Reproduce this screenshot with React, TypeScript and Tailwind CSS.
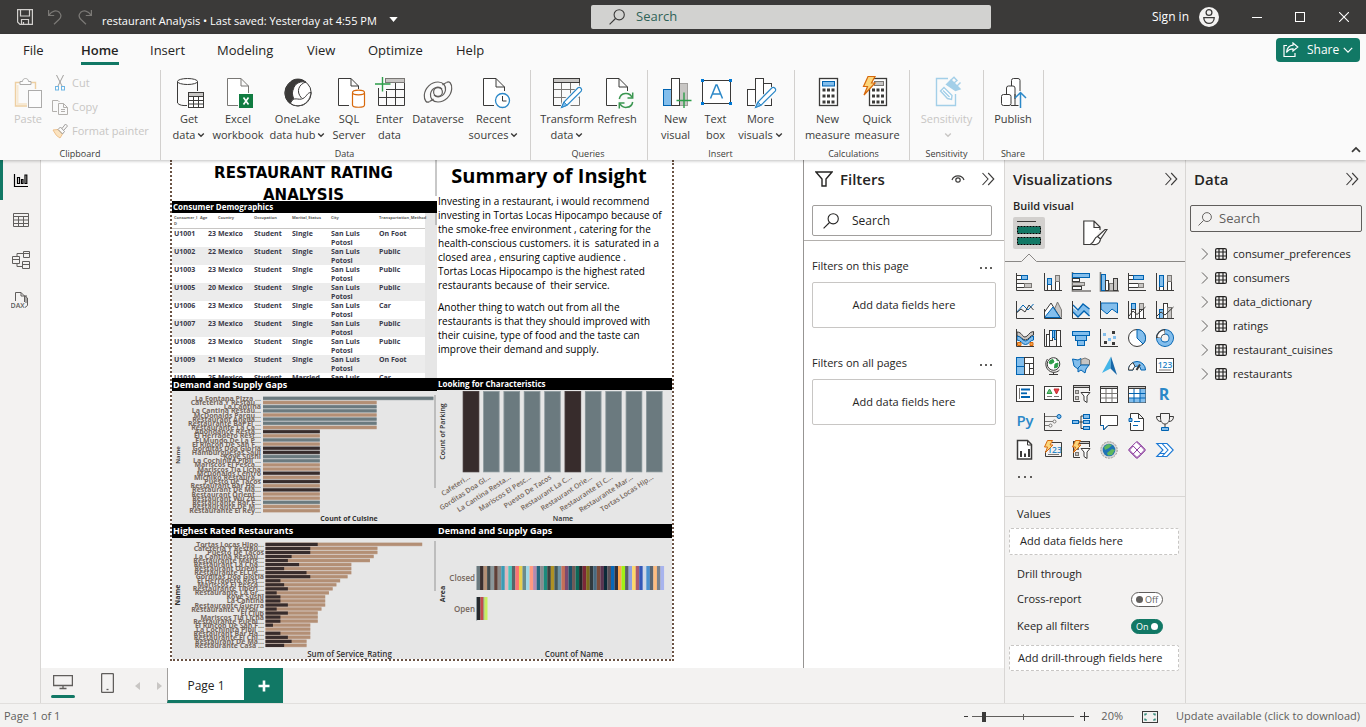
import React, { useState } from "react";

const K = "#3b3a39";
const BF = "#83beec";
const BS = "#0063b1";
const GF = "#c8c6c4";
const GS = "#797774";

type Kids = { children?: React.ReactNode };

/* ---------- shared icons ---------- */

const Magnifier = ({ className }: { className: string }) => (
  <svg viewBox="0 0 16 16" className={className} fill="none" stroke="currentColor" strokeWidth="1.1" aria-hidden>
    <circle cx="10.2" cy="5.8" r="5.1" />
    <path d="M6.5 9.5L.6 15.4" />
  </svg>
);

const ChevronDown = ({ className }: { className: string }) => (
  <svg viewBox="0 0 8 8" className={className} fill="none" stroke="currentColor" strokeWidth="1.4" aria-hidden>
    <path d="M1.2 2.4L4 5.2L6.8 2.4" />
  </svg>
);

const DoubleChevron = () => (
  <svg viewBox="0 0 14 14" className="h-3.5 w-3.5" fill="none" stroke={K} strokeWidth="1.1" aria-hidden>
    <path d="M1.5 1L7 7L1.5 13M7.2 1L12.8 7L7.2 13" />
  </svg>
);

const Dots = () => (
  <>
    <span className="h-0.5 w-0.5 bg-[#605e5c]" />
    <span className="h-0.5 w-0.5 bg-[#605e5c]" />
    <span className="h-0.5 w-0.5 bg-[#605e5c]" />
  </>
);

/* ---------- ribbon icons ---------- */

const Big = ({ children, box = "0 0 30 32" }: Kids & { box?: string }) => (
  <svg viewBox={box} className="h-8 w-[30px] overflow-visible" fill="none" stroke={K} strokeWidth="1" aria-hidden>
    {children}
  </svg>
);

const Pencil = () => (
  <g>
    <path d="M27 10.6a2.6 2.6 0 0 1 3.4 3.8L16 29L9.6 31L11.6 24.6z" fill="#fff" stroke="#fafafa" strokeWidth="3" />
    <path d="M26 10.8a2.4 2.4 0 0 1 3.2 3.4L15 28.2L9.6 30.4L12 25z" fill="#fff" stroke="#2b88c8" strokeWidth="1.2" />
    <path d="M12 25L15 28.2L9.6 30.4z" fill={BF} stroke="#2b88c8" />
  </g>
);

const IconPaste = () => (
  <Big>
    <g opacity=".5">
      <path d="M7 5.500H2.500V29H14" stroke="#e3a64c" strokeWidth="1.400" />
      <path d="M4.500 8V27H14" stroke="#f5d9ad" strokeWidth="2" />
      <path d="M17 5.500H22.500V12" stroke="#e3a64c" strokeWidth="1.400" />
      <path d="M7 7.500V4.500H9.500C9.500 .5 15.500 .5 15.500 4.500H18V7.500z" stroke="#605e5c" fill="#fff" />
      <rect x="15.500" y="13.500" width="13" height="17" stroke="#605e5c" fill="#fff" />
    </g>
  </Big>
);

const IconGetData = () => (
  <Big box="-2 0 30 32">
    <path d="M1.500 4.500V26C3 28.300 7 28.800 11 28.500" fill="none" />
    <path d="M21.500 4.500V14" />
    <ellipse cx="11.500" cy="4.500" rx="10" ry="3" fill="#fff" />
    <rect x="12.500" y="15.500" width="15" height="15" fill="#fff" />
    <rect x="12.500" y="15.500" width="15" height="4" fill={GF} />
    <path d="M17.500 19.500V30.500M22.500 19.500V30.500M12.500 23.500H27.500M12.500 27H27.500" />
  </Big>
);

const IconExcel = () => (
  <Big box="-1 0 30 32">
    <path d="M14 28.500H3.500V1.500H17L24.500 9V16M17 1.500V9H24.500" fill="#fff" stroke={GS} />
    <rect x="15" y="17" width="14" height="14" fill="#107c41" stroke="none" />
    <path d="M19.500 20.500L24.500 27.500M24.500 20.500L19.500 27.500" stroke="#fff" strokeWidth="1.600" />
  </Big>
);

const IconOneLake = () => (
  <Big>
    <circle cx="15" cy="15.800" r="13.200" fill="#fff" />
    <path d="M7.500 5C10.500 1.200 19 1 22.500 5C16.500 4 10.500 8 9.300 16C9.800 20.500 11 23 13.500 25.500C10 27.500 7.500 27.500 5.500 25C.5 20 1.200 10.500 7.500 5z" fill={K} />
    <path d="M11 10.500C12.500 6 18 4 23 5C16 7 12.500 14.500 18.500 21" fill="#fff" />
    <path d="M7.500 26C11 18.500 15 24 20 21.500C24 19.500 24 15.500 28 15.500C27.500 22 23 28.500 15 28.800C11.500 28.800 9 27.800 7.500 26z" fill="#fff" />
  </Big>
);

const IconSql = () => (
  <Big box="-1 0 30 32">
    <path d="M14 28.500H3.500V1.500H16L23.500 9V12M16 1.500V9H23.500" fill="#fff" />
    <g stroke="#d8690c" strokeWidth="1.200">
      <path d="M17.500 16V28C17.500 31 29.500 31 29.500 28V16" fill="#fff" />
      <ellipse cx="23.500" cy="15.500" rx="6" ry="2.300" fill="#fff" />
    </g>
  </Big>
);

const IconEnter = () => (
  <Big>
    <path d="M3.500 11V28.500H29.500V1.500H10M3.500 20.500H29.500M11.500 14V28.500M20.500 6V28.500M11 12.500H29.500" />
    <rect x="10.500" y="1.500" width="19" height="4" fill={GF} stroke={GS} />
    <path d="M7.500 0V14.500M0 7H15.500" stroke="#2d9d49" strokeWidth="1.400" />
  </Big>
);

const IconDataverse = () => (
  <Big>
    <g stroke="#605e5c" strokeWidth="1.200">
      <path d="M23.500 5.500C26 3.500 29 6 28.700 12C28 19 22 25 15 25C9.500 25 7 21 7.500 17C8.500 10.500 15.500 8.500 19 12" />
      <path d="M6.500 24.500C4 26.500 1 24 1.300 18C2 11 8 5 15 5C20.500 5 23 9 22.500 13C21.500 19.500 14.500 21.500 11 18" />
      <circle cx="15" cy="15" r="4.400" />
      <path d="M23.500 5.500C21.500 6.500 20.500 7 19.500 8M6.500 24.500C8.500 23.500 9.500 23 10.500 22" />
    </g>
  </Big>
);

const IconRecent = () => (
  <Big box="-1 0 30 32">
    <path d="M14 28.500H3.500V1.500H16L24.500 10V14M16 1.500V10H24.500" fill="#fff" />
    <circle cx="22.500" cy="23.500" r="7" fill="#fff" stroke="#2b88c8" strokeWidth="1.300" />
    <path d="M22.500 19V24H26.500" />
  </Big>
);

const IconTransform = () => (
  <Big>
    <path d="M1.500 1.500V28.500H27.500V1.500zM1.500 12.500H27.500M1.500 20.500H27.500M9.500 5.500V28.500M18.500 5.500V28.500" stroke={GS} />
    <rect x="1.500" y="1.500" width="26" height="4" fill={GF} />
    <path d="M1.500 1.500V28.500H11" />
    <Pencil />
  </Big>
);

const IconRefresh = () => (
  <Big box="-2 0 30 32">
    <path d="M13 28.500H2.500V1.500H15L23.500 10V14M15 1.500V10H23.500" fill="#fff" />
    <circle cx="22" cy="23.500" r="8" fill="#fafafa" stroke="none" />
    <g stroke="#3a9650" strokeWidth="1.500">
      <path d="M15.300 22C16.500 15.500 25.500 14.500 28 20.500M28.700 25C27.500 31.500 18.500 32.300 16 26.500" />
      <path d="M28.700 15.500V21H23.500M15.300 31.500V26H20.500" />
    </g>
  </Big>
);

const IconNewVisual = () => (
  <Big>
    <rect x="2.500" y="12.500" width="8" height="16" fill={BF} stroke={BS} />
    <rect x="18.500" y="6.500" width="8" height="22" fill={GF} stroke="#a19f9d" />
    <rect x="10.500" y="1.500" width="8" height="27" fill="#fff" />
    <path d="M23 15.500V31M15.500 23.500H30.500" stroke="#2d9d49" strokeWidth="1.400" />
  </Big>
);

const IconTextBox = () => (
  <Big>
    <rect x="1.500" y="3.500" width="28" height="23" fill="#fff" />
    <path d="M0 2h3v3h-3zM28 2h3v3h-3zM0 25h3v3h-3zM28 25h3v3h-3z" fill="#0078d4" stroke="none" />
    <path d="M9.500 21.500L15 8H16L21.500 21.500M11.500 17H19.500" stroke="#2b88c8" strokeWidth="1.500" />
  </Big>
);

const IconMoreVisuals = () => (
  <Big>
    <rect x="1.500" y="12.500" width="8" height="16" fill="#fff" />
    <rect x="17.500" y="6.500" width="8" height="22" fill="#fff" />
    <rect x="9.500" y="1.500" width="8" height="27" fill="#fff" />
    <Pencil />
  </Big>
);

const dots = (x: number, y: number) =>
  [0, 1, 2].flatMap((r) =>
    [0, 1, 2].map((c) => <rect key={`${r}-${c}`} x={x + c * 4.5} y={y + r * 6} width="3" height="3" fill={K} stroke="none" />)
  );

const IconNewMeasure = () => (
  <Big>
    <rect x="6.500" y="1.500" width="18" height="27" fill="#fff" strokeWidth="1.300" />
    <rect x="9.500" y="4.500" width="12" height="4.500" fill={BF} stroke={BS} />
    {dots(9.5, 11.5)}
  </Big>
);

const IconQuick = () => (
  <Big>
    <rect x="7.500" y="1.500" width="17" height="27" fill="#fff" strokeWidth="1.300" />
    <rect x="12.500" y="4.500" width="9" height="4" fill={GF} stroke={GS} />
    {dots(10, 11.5)}
    <path d="M6 -.5H13L9.500 6H13L2 18L5.500 9.500H1.500z" fill="#fbd67c" stroke="#d8690c" strokeWidth="1.200" />
  </Big>
);

const IconSensitivity = () => (
  <Big>
    <g stroke="#a3cfe8" strokeWidth="1.400">
      <path d="M16 1.500H4.500V28.500H23.500V17" />
      <path d="M8.500 14L12 10.500L20 18.500L19.500 22.500L15.500 21.500z" fill="#fff" />
      <path d="M11 13.500L17.500 20" />
      <path d="M14.500 7.500L19 3L28 12L23.500 13.500z" fill="#a3cfe8" />
      <path d="M19 3L22 .3L25 3.500L22 6M25 9L28.500 5.500" />
    </g>
  </Big>
);

const IconPublish = () => (
  <Big box="-2 0 30 32">
    <path d="M11.500 9V3.500a2 2 0 0 1 2-2H18a2 2 0 0 1 2 2V14" fill="#fff" />
    <path d="M6.500 17V11a2 2 0 0 1 2-2H13a2 2 0 0 1 2 2V28.500" fill="#fff" />
    <rect x="1.500" y="17.500" width="9.500" height="11" rx="2" fill="#fff" />
    <path d="M11 28.500H18.500M15 22V17" />
    <path d="M20.500 31V15.500M15 21L20.500 15.500L26 21" stroke="#2b88c8" strokeWidth="1.500" />
  </Big>
);

type RibbonItem = { icon: React.ReactNode; lines: string[]; width: string; menu?: boolean; disabled?: boolean };

const RibbonButton = ({ icon, lines, width, menu, disabled }: RibbonItem) => (
  <button
    type="button"
    disabled={disabled}
    className={`${width} flex flex-col items-center text-[11px] leading-4 whitespace-nowrap ${disabled ? "text-[#c8c6c4]" : "text-[#3b3a39]"}`}
  >
    {icon}
    <span className="pt-0.5">{lines[0]}</span>
    <span className="flex h-4 items-center">
      {lines[1]}
      {menu && <ChevronDown className="ml-0.5 h-2 w-2" />}
    </span>
  </button>
);

const groups: { label: string; pad: string; items: RibbonItem[] }[] = [
  {
    label: "Data",
    pad: "pl-[5px] pr-[7px]",
    items: [
      { icon: <IconGetData />, lines: ["Get", "data"], menu: true, width: "w-[46px]" },
      { icon: <IconExcel />, lines: ["Excel", "workbook"], width: "w-[52px]" },
      { icon: <IconOneLake />, lines: ["OneLake", "data hub"], menu: true, width: "w-[67px]" },
      { icon: <IconSql />, lines: ["SQL", "Server"], width: "w-[36px]" },
      { icon: <IconEnter />, lines: ["Enter", "data"], width: "w-[45px]" },
      { icon: <IconDataverse />, lines: ["Dataverse"], width: "w-[52px]" },
      { icon: <IconRecent />, lines: ["Recent", "sources"], menu: true, width: "w-[59px]" },
    ],
  },
  {
    label: "Queries",
    pad: "pl-[7px] pr-[9px]",
    items: [
      { icon: <IconTransform />, lines: ["Transform", "data"], menu: true, width: "w-[58px]" },
      { icon: <IconRefresh />, lines: ["Refresh"], width: "w-[42px]" },
    ],
  },
  {
    label: "Insert",
    pad: "pl-[7px] pr-2",
    items: [
      { icon: <IconNewVisual />, lines: ["New", "visual"], width: "w-[41px]" },
      { icon: <IconTextBox />, lines: ["Text", "box"], width: "w-[39px]" },
      { icon: <IconMoreVisuals />, lines: ["More", "visuals"], menu: true, width: "w-[51px]" },
    ],
  },
  {
    label: "Calculations",
    pad: "pl-[9px] pr-[6px]",
    items: [
      { icon: <IconNewMeasure />, lines: ["New", "measure"], width: "w-[47px]" },
      { icon: <IconQuick />, lines: ["Quick", "measure"], width: "w-[52px]" },
    ],
  },
  {
    label: "Sensitivity",
    pad: "px-[10px]",
    items: [{ icon: <IconSensitivity />, lines: ["Sensitivity", ""], menu: true, disabled: true, width: "w-[53px]" }],
  },
  {
    label: "Share",
    pad: "pl-[9px] pr-[10px]",
    items: [{ icon: <IconPublish />, lines: ["Publish"], width: "w-[40px]" }],
  },
];

/* ---------- title bar and ribbon ---------- */

const TitleBar = () => (
  <header className="flex h-[34px] items-center bg-[#3b3a39] text-xs text-white">
    <div className="flex flex-[591_1_0%] items-center">
      <button type="button" aria-label="Save" className="ml-[17px]">
        <svg viewBox="0 0 16 16" className="h-4 w-4" fill="none" stroke="#d2d0ce" strokeWidth="1.200">
          <path d="M.6.6H15.400V15.400H3L.6 13z" />
          <path d="M3.500.6V7H12.500V.6M4.500 15.400V10.500H11.500V15.400M6.500 13V15.400" />
        </svg>
      </button>
      <button type="button" aria-label="Undo" className="ml-[14px]">
        <svg viewBox="0 0 16 16" className="h-4 w-4" fill="none" stroke="#7b7976" strokeWidth="1.200">
          <path d="M1.600 1V6.500H7.200M1.800 6.300C5 1.500 9.500.8 12.300 3.300C14.800 5.800 14 8.500 12 10.500L7 15.300" />
        </svg>
      </button>
      <button type="button" aria-label="Redo" className="ml-[14px]">
        <svg viewBox="0 0 16 16" className="h-4 w-4" fill="none" stroke="#7b7976" strokeWidth="1.200">
          <path d="M14.400 1V6.500H8.800M14.200 6.300C11 1.500 6.500.8 3.700 3.300C1.200 5.800 2 8.500 4 10.500L9 15.300" />
        </svg>
      </button>
      <button type="button" className="ml-[9px] flex items-center pt-2 text-[11px] whitespace-nowrap">
        restaurant Analysis • Last saved: Yesterday at 4:55 PM
        <svg viewBox="0 0 10 6" className="mb-1 ml-3 h-[5px] w-[9px]" aria-hidden>
          <path d="M0 0H10L5 6z" fill="#fff" />
        </svg>
      </button>
    </div>
    <label className="flex h-6 w-[400px] items-center rounded-xs bg-[#d2d2d0] pl-[18px]">
      <span className="sr-only">Search</span>
      <Magnifier className="h-4 w-4 text-[#3b3a39]" />
      <input type="search" placeholder="Search" className="ml-[11px] flex-1 bg-transparent text-[13px] outline-none placeholder:text-[#2f6358]" />
    </label>
    <div className="flex flex-[375_1_0%] items-center justify-end">
      <button type="button" className="flex items-center gap-2.5">
        Sign in
        <svg viewBox="0 0 20 20" className="h-5 w-5" aria-hidden>
          <circle cx="10" cy="10" r="10" fill="#f3f2f1" />
          <circle cx="10" cy="5.500" r="2.900" fill="none" stroke={K} strokeWidth="1.300" />
          <path d="M4.800 10.700H15.200C15.200 18.300 4.800 18.300 4.800 10.700z" fill="none" stroke={K} strokeWidth="1.300" />
        </svg>
      </button>
      <button type="button" aria-label="Minimize" className="ml-[27px] flex h-[34px] w-[44px] items-center pl-[6px]">
        <span className="h-px w-[10px] bg-white" />
      </button>
      <button type="button" aria-label="Maximize" className="flex w-[44px] pl-[5px]">
        <span className="h-2.5 w-2.5 border border-white" />
      </button>
      <button type="button" aria-label="Close" className="w-8 pl-[5px]">
        <svg viewBox="0 0 10 10" className="h-2.5 w-2.5" stroke="#fff" strokeWidth="1.100">
          <path d="M0 0L10 10M10 0L0 10" />
        </svg>
      </button>
    </div>
  </header>
);

const menus = [
  { name: "File", width: "w-[58px]" },
  { name: "Home", width: "w-[69px]" },
  { name: "Insert", width: "w-[67px]" },
  { name: "Modeling", width: "w-[90px]" },
  { name: "View", width: "w-[61px]" },
  { name: "Optimize", width: "w-[88px]" },
  { name: "Help", width: "w-[60px]" },
];

const Ribbon = () => (
  <div className="relative z-10 bg-[#fafafa] text-[#252423] shadow-[0_1px_3px_rgba(0,0,0,0.25)]">
    <div className="flex h-9 items-start justify-between pr-1.5 pl-[23px]">
      <nav className="flex pt-1.5 text-[13px] leading-5">
        {menus.map((m) => (
          <button key={m.name} type="button" className={`${m.width} flex`}>
            <span className={m.name === "Home" ? "border-b-[3px] border-[#117865] pb-0.5 font-semibold" : ""}>{m.name}</span>
          </button>
        ))}
      </nav>
      <button type="button" className="mt-1 flex h-6 w-[84px] items-center rounded bg-[#117865] pl-[7px] text-xs text-white">
        <svg viewBox="0 0 16 16" className="h-4 w-4" fill="none" stroke="#fff" strokeWidth="1.200" aria-hidden>
          <path d="M4 3.500H1V14.500H12V11M10 1L14.800 5L10 9V6.800C7 6.800 5 8 3.500 10.500C4 6 6.500 3.500 10 3.200z" />
        </svg>
        <span className="ml-2">Share</span>
        <svg viewBox="0 0 10 10" className="ml-1 h-2.5 w-2.5" fill="none" stroke="#fff" strokeWidth="1.200" aria-hidden>
          <path d="M.8 2.800L5 7.200L9.200 2.800" />
        </svg>
      </button>
    </div>
    <div className="flex h-[90px] items-stretch">
      <div className="flex w-[161px] flex-col border-r border-[#d2d0ce] text-[#c8c6c4]">
        <div className="flex pt-[7px]">
          <button type="button" disabled className="ml-[10px] flex w-[36px] flex-col items-center text-[11px] leading-4">
            <IconPaste />
            <span className="pt-0.5">Paste</span>
          </button>
          <div className="-mt-1.5 flex flex-col pl-[6px] text-[11px] leading-6 whitespace-nowrap">
            <button type="button" disabled className="flex h-6 items-center gap-1">
              <svg viewBox="0 0 16 16" className="h-4 w-4" fill="none" aria-hidden>
                <path d="M4.500 0L10 11M11.500 0L6 11" stroke="#a19f9d" />
                <rect x="3.500" y="11.500" width="3" height="3.500" stroke="#6fb6e4" />
                <rect x="9.500" y="11.500" width="3" height="3.500" stroke="#6fb6e4" />
              </svg>
              Cut
            </button>
            <button type="button" disabled className="flex h-6 items-center gap-1">
              <svg viewBox="0 0 16 16" className="h-4 w-4" fill="none" stroke="#b3b0ad" aria-hidden>
                <path d="M5 12.500H.5V1.500H6L7.500 3M6.500 4.500H11.500L15.500 8.500V15.500H6.500zM11.500 4.500V8.500H15.500M9 10.500H13M9 12.500H13" />
              </svg>
              Copy
            </button>
            <button type="button" disabled className="flex h-6 items-center gap-1">
              <svg viewBox="0 0 16 16" className="h-4 w-4" fill="none" aria-hidden>
                <path d="M1 7L6 6.500L10.500 11L8 15L4.500 12.500z" fill="#fbe3c0" stroke="#eec08a" />
                <path d="M6 6.500L8.500 4L12.500 8.500L10.500 11zM10 5.500L13.500 1L15.500 3L12 7" stroke="#a19f9d" />
              </svg>
              Format painter
            </button>
          </div>
        </div>
        <span className="mt-auto pb-px text-center text-[9px] leading-[11px] text-[#3b3a39]">Clipboard</span>
      </div>
      {groups.map((g) => (
        <div key={g.label} className={`${g.pad} flex flex-col border-r border-[#d2d0ce]`}>
          <div className="flex pt-[7px]">
            {g.items.map((it) => (
              <RibbonButton key={it.lines.join(" ")} {...it} />
            ))}
          </div>
          <span className="mt-auto pb-px text-center text-[9px] leading-[11px] text-[#3b3a39]">{g.label}</span>
        </div>
      ))}
      <button type="button" aria-label="Collapse ribbon" className="mt-auto mr-[5px] mb-[5px] ml-auto">
        <svg viewBox="0 0 8 8" className="h-2.5 w-2.5" fill="none" stroke={K} strokeWidth="1.400">
          <path d="M.8 5.500L4 2.300L7.200 5.500" />
        </svg>
      </button>
    </div>
  </div>
);

/* ---------- view switcher on the left ---------- */

const SideNav = () => (
  <nav className="flex w-[41px] shrink-0 flex-col border-r border-[#d8d6d4] bg-[#f3f2f1]">
    <button type="button" aria-label="Report view" className="flex h-10 items-center border-l-[3px] border-[#117865] pl-2.5">
      <svg viewBox="0 0 16 16" className="h-4 w-4" fill="none" stroke="#000" strokeWidth="1.200">
        <path d="M1.500 2V14.500H15M4.500 5.500h2v6h-2zM8.500 7.500h1.500v4h-1.500zM12 3h1.800v8.500H12z" />
      </svg>
    </button>
    <button type="button" aria-label="Table view" className="flex h-10 items-center pl-[13px]">
      <svg viewBox="0 0 16 16" className="h-4 w-4" fill="none" stroke="#605e5c">
        <path d="M.5 1.500H15.500V14.500H.5zM.5 4.500H15.500M.5 8H15.500M.5 11.500H15.500M5.500 4.500V14.500M10.500 4.500V14.500" />
      </svg>
    </button>
    <button type="button" aria-label="Model view" className="flex h-10 items-center pl-3">
      <svg viewBox="0 0 18 18" className="h-[18px] w-[18px]" fill="none" stroke="#605e5c">
        <path d="M.5 5.500H7.500V12.500H.5zM.5 8.500H7.500M11.500.5H17.500V6.500H11.500zM11.500 2.500H17.500M10.500 10.500H17.500V17.500H10.500zM10.500 13.500H17.500M5 5.500V2.500H11.500M5 12.500V15.500H10.500" />
      </svg>
    </button>
    <button type="button" aria-label="DAX query view" className="flex h-10 items-center pl-[11px]">
      <svg viewBox="0 0 18 18" className="h-[18px] w-[18px]" fill="none" stroke="#605e5c">
        <path d="M4.500 10V1.500H10L13.500 5V11M10 1.500V5H13.500M13.500 4.500L16.500 7V14.500L14 16.500M15 4V12" />
        <text x="-.5" y="17" fontSize="7" fontWeight="600" fill="#605e5c" stroke="none">DAX</text>
      </svg>
    </button>
  </nav>
);

/* ---------- report canvas ---------- */

const consumers = [
  ["U1001", "23", "Single", "On Foot"],
  ["U1002", "22", "Single", "Public"],
  ["U1003", "23", "Single", "Public"],
  ["U1005", "20", "Single", "Public"],
  ["U1006", "23", "Single", "Car"],
  ["U1007", "23", "Single", "Public"],
  ["U1008", "23", "Single", "Public"],
  ["U1009", "21", "Single", "On Foot"],
  ["U1010", "25", "Married", "Car"],
];

const ConsumerTable = () => (
  <div className="flex h-[165px] overflow-hidden bg-[#e6e6e6]">
    <table className="w-[253px] table-fixed border-collapse self-start bg-white text-left text-[7px] leading-[9px] font-bold text-[#3a3a4a]">
      <colgroup>
        <col className="w-[28px]" />
        <col className="w-[16px]" />
        <col className="w-[36px]" />
        <col className="w-[38px]" />
        <col className="w-[39px]" />
        <col className="w-[48px]" />
        <col className="w-[48px]" />
      </colgroup>
      <thead className="align-top text-[4px] leading-[6px] text-[#605e5c]">
        <tr className="h-[15px] border-b border-[#c8c6c4]">
          <th className="pt-0.5 pl-0.5">Consumer_I<br />D</th>
          <th className="pt-0.5">Age</th>
          <th className="pt-0.5 pl-0.5">Country</th>
          <th className="pt-0.5 pl-0.5">Occupation</th>
          <th className="pt-0.5 pl-0.5">Marital_Status</th>
          <th className="pt-0.5 pl-0.5">City</th>
          <th className="pt-0.5 pl-0.5">Transportation_Method</th>
        </tr>
      </thead>
      <tbody className="align-top">
        {consumers.map(([id, age, marital, transport]) => (
          <tr key={id} className="h-[18px] even:bg-[#ececec]">
            <td className="pl-0.5">{id}</td>
            <td className="text-right">{age}</td>
            <td className="pl-0.5">Mexico</td>
            <td className="pl-0.5">Student</td>
            <td className="pl-0.5">{marital}</td>
            <td className="pr-3 pl-0.5">San Luis Potosi</td>
            <td className="pl-0.5">{transport}</td>
          </tr>
        ))}
      </tbody>
    </table>
    <div className="ml-auto h-3 w-0.5 bg-[#bdbdbd]" />
  </div>
);

const TONE: Record<string, string> = { G: "#6b7a7f", T: "#b38f75", D: "#372c2c" };

const cuisines: [string, number, string][] = [
  ["La Fontana Pizza ...", 3, "G"],
  ["Cafeteria Y Restau...", 2, "T"],
  ["La Cantina", 2, "G"],
  ["La Cantina Restau...", 2, "G"],
  ["McDonalds Parqu...", 2, "T"],
  ["Restaurant Anglia...", 2, "G"],
  ["Restaurante Bar El ...", 2, "G"],
  ["Restaurante La Ca...", 2, "T"],
  ["Abondance Resta...", 1, "D"],
  ["El Herradero Rest...", 1, "T"],
  ["El Mundo De La P...", 1, "G"],
  ["El Rincón De San F...", 1, "T"],
  ["Gorditas Doa Gloria", 1, "D"],
  ["Hamburguesas Saul", 1, "D"],
  ["Koye Sushi", 1, "G"],
  ["La Cochinita Pibil ...", 1, "G"],
  ["Mariscos El Pesca...", 1, "T"],
  ["Mariscos Tia Licha", 1, "T"],
  ["McDonalds Centro", 1, "D"],
  ["Michiko Restaura...", 1, "T"],
  ["Puesto De Tacos", 1, "D"],
  ["Restaurant Bar Ha...", 1, "T"],
  ["Restaurant De Ma...", 1, "D"],
  ["Restaurant Orient...", 1, "T"],
  ["Restaurant Wu Zh...", 1, "T"],
  ["Restaurante Bar F...", 1, "G"],
  ["Restaurante De M...", 1, "T"],
  ["Restaurante El Rey...", 1, "T"],
];

const ratings: [string, number, number][] = [
  ["Tortas Locas Hipo...", 14, 42],
  ["Cafeteria Y Restau...", 12, 30],
  ["Puesto De Tacos", 12, 30],
  ["La Cantina Restau...", 7, 29],
  ["Restaurante Maris...", 6, 28],
  ["Restaurant La Cha...", 9, 23],
  ["Restaurant Orient...", 5, 23],
  ["Restaurante El Cie...", 11, 23],
  ["Gorditas Doa Gloria", 12, 22],
  ["El Herradero Rest...", 4, 20],
  ["Mariscos El Pesca...", 5, 19],
  ["Restaurante Tiberi...", 6, 18],
  ["Restaurante La Gr...", 3, 17],
  ["Koye Sushi", 4, 16],
  ["La Cantina", 4, 16],
  ["Restaurante Guerra", 6, 16],
  ["Restaurante Versal...", 3, 15],
  ["El Club", 6, 14],
  ["Mariscos Tia Licha", 4, 14],
  ["Restaurante Puebl...", 4, 14],
  ["El Rincón De San F...", 2, 12],
  ["La Cochinita Pibil ...", 0, 12],
  ["Restaurant Bar Ha...", 4, 12],
  ["Restaurante El Chi...", 6, 12],
  ["Restaurant De Ma...", 7, 11],
  ["Restaurante Casa ...", 5, 11],
];

const parking = [
  "Cafeteri...",
  "Gorditas Doa Gl...",
  "La Cantina Resta...",
  "Mariscos El Pesc...",
  "Puesto De Tacos",
  "Restaurant La C...",
  "Restaurant Orie...",
  "Restaurante El C...",
  "Restaurante Mar...",
  "Tortas Locas Hip...",
];

const closedColors = [
  "#6b7a7f", "#3a2e2e", "#b38f75", "#414a4c", "#8b979a", "#5f4038", "#8c8a88", "#3a9bb5", "#dfb8bd", "#4ec4bc",
  "#5a6468", "#fb7374", "#e8d050", "#6b8a8c", "#a0d8e8", "#fe9a80", "#b48ab0", "#22667e", "#8a8c90", "#1c8a7c",
  "#3a4040", "#ae9125", "#44585a", "#6a93a5", "#c47058", "#7c4a70", "#1d5068", "#6e5a58", "#0d6858", "#252528",
  "#7c2838", "#7c6a1c", "#303a40", "#4a6a80", "#7c4c3c", "#5a3450", "#0c2a38", "#5a5058", "#0868b8", "#30303c",
  "#fea64c", "#a0f016", "#5a6068", "#90a0e0", "#fed868", "#a85a70", "#3458b8", "#d0d8e8", "#4a90d0", "#5a6470",
  "#febc80", "#78808a", "#a8b4ee",
];

const LABEL = "#75665c";
const AXIS = "#333";

const CuisineChart = () => (
  <svg viewBox="172 391 265 133" className="block h-[133px] w-[265px] bg-[#e6e6e6]" fontWeight="700" role="img" aria-label="Count of Cuisine by Name">
    {cuisines.map(([name, value, tone], i) => {
      const y = 398.3 + i * 4.16;
      return (
        <g key={name}>
          <text x="261" y={y + 2.6} fontSize="7" fill={LABEL} textAnchor="end">{name}</text>
          <rect x="263" y={y - 2} width={value * 56.8} height="4" fill={TONE[tone]} opacity=".45" />
          <rect x="263" y={y - 1.4} width={value * 56.8} height="2.9" fill={TONE[tone]} />
        </g>
      );
    })}
    <text x="349" y="521" fontSize="7" fill={AXIS} textAnchor="middle">Count of Cuisine</text>
    <text transform="translate(180 455) rotate(-90)" fontSize="6" fill={AXIS} textAnchor="middle" fontWeight="600">Name</text>
    <rect x="434" y="395" width="2" height="93" fill="#bdbdbd" />
  </svg>
);

const RatingChart = () => (
  <svg viewBox="172 538 265 121" className="block h-[121px] w-[265px] bg-[#e6e6e6]" fontWeight="700" role="img" aria-label="Sum of Service Rating by Name">
    {ratings.map(([name, dark, total], i) => {
      const y = 544.3 + i * 4.04;
      return (
        <g key={name}>
          <text x="264" y={y + 2.6} fontSize="7" fill={LABEL} textAnchor="end">{name}</text>
          <rect x="265.500" y={y - 2} width={total * 3.73} height="4" fill={TONE.T} opacity=".45" />
          <rect x="265.500" y={y - 1.4} width={total * 3.73} height="2.900" fill={TONE.T} />
          <rect x="265.500" y={y - 1.5} width={dark * 3.73} height="3.200" fill={TONE.D} />
        </g>
      );
    })}
    <text x="349.500" y="657" fontSize="8" fill={AXIS} textAnchor="middle" fontWeight="600">Sum of Service_Rating</text>
    <text transform="translate(180 595) rotate(-90)" fontSize="7" fill={AXIS} textAnchor="middle">Name</text>
    <rect x="434" y="541" width="2" height="50" fill="#bdbdbd" />
  </svg>
);

const ParkingChart = () => (
  <svg viewBox="437 390 235 134" className="block h-[134px] w-[235px] bg-[#e6e6e6]" fontWeight="600" role="img" aria-label="Count of Parking by Name">
    {parking.map((name, i) => {
      const x = 463 + i * 20.37;
      return (
        <g key={name}>
          <rect x={x - 0.3} y="391" width="16.600" height="81.300" fill={i % 5 ? "#8f9b9f" : "#4c4242"} />
          <rect x={x + 0.6} y="392" width="14.800" height="79.500" fill={i % 5 ? TONE.G : TONE.D} />
          <text transform={`translate(${x + 7.5} 478.5) rotate(-33)`} fontSize="7" fill={LABEL} textAnchor="end">{name}</text>
        </g>
      );
    })}
    <text transform="translate(444.500 431.500) rotate(-90)" fontSize="7" fill={AXIS} textAnchor="middle">Count of Parking</text>
    <text x="563" y="521" fontSize="7" fill={AXIS} textAnchor="middle">Name</text>
  </svg>
);

const AreaChart = () => (
  <svg viewBox="437 538 235 121" className="block h-[121px] w-[235px] bg-[#e6e6e6]" fontWeight="600" role="img" aria-label="Count of Name by Area">
    {closedColors.map((c, i) => (
      <rect key={c} x={476.5 + i * (187.5 / closedColors.length)} y="566" width="3.600" height="24" fill={c} />
    ))}
    <rect x="476" y="597" width="1.300" height="23.500" fill="#8b979a" />
    <rect x="477" y="597" width="3.500" height="23" fill="#25282c" />
    <rect x="480.500" y="597" width="2.800" height="23" fill="#c4484c" />
    <rect x="483.300" y="597" width="1.200" height="23" fill="#8a8f62" />
    <rect x="484.500" y="597" width="3" height="23" fill="#c8f060" />
    <text x="475" y="581" fontSize="8" fill={LABEL} textAnchor="end">Closed</text>
    <text x="475" y="612" fontSize="8" fill={LABEL} textAnchor="end">Open</text>
    <text transform="translate(445 594) rotate(-90)" fontSize="7" fill={AXIS} textAnchor="middle" fontWeight="700">Area</text>
    <text x="574" y="657" fontSize="8" fill={AXIS} textAnchor="middle">Count of Name</text>
  </svg>
);

const VisualTitle = ({ children, className }: Kids & { className: string }) => (
  <h3 className={`${className} bg-black pl-px font-bold whitespace-nowrap text-white`}>{children}</h3>
);

const Report = () => (
  <div className="mx-auto flex w-[504px] border-2 border-t-0 border-dotted border-[#6b5344]">
    <div className="w-[265px]">
      <div className="flex h-[41px] overflow-hidden bg-white">
        <h1 className="flex-1 pt-0.5 text-center font-['DejaVu_Sans'] text-[15px] leading-[22px] font-bold text-black">
          RESTAURANT RATING
          <br />
          ANALYSIS
        </h1>
        <div className="h-9 w-0.5 bg-[#c8c8c8]" />
      </div>
      <VisualTitle className="h-3 text-[8px] leading-3">Consumer Demographics</VisualTitle>
      <ConsumerTable />
      <VisualTitle className="h-[13px] text-[9px] leading-[13px]">Demand and Supply Gaps</VisualTitle>
      <CuisineChart />
      <VisualTitle className="h-[14px] text-[9px] leading-[14px]">Highest Rated Restaurants</VisualTitle>
      <RatingChart />
    </div>
    <div className="w-[235px] bg-white">
      <div className="h-[218px] overflow-hidden pl-px text-[10px] leading-[14px] whitespace-nowrap text-black">
        <h1 className="pr-3 pb-0.5 text-center text-xl leading-8 font-bold">Summary of Insight</h1>
        <p className="whitespace-pre">
          {"Investing in a restaurant, i would recommend\ninvesting in Tortas Locas Hipocampo because of\nthe smoke-free environment , catering for the\nhealth-conscious customers. it is  saturated in a\nclosed area , ensuring captive audience .\nTortas Locas Hipocampo is the highest rated\nrestaurants because of  their service."}
        </p>
        <p className="pt-2 whitespace-pre">
          {"Another thing to watch out from all the\nrestaurants is that they should improved with\ntheir cuisine, type of food and the taste can\nimprove their demand and supply."}
        </p>
      </div>
      <VisualTitle className="h-3 text-[8px] leading-3">Looking for Characteristics</VisualTitle>
      <ParkingChart />
      <VisualTitle className="h-[14px] text-[9px] leading-[14px]">Demand and Supply Gaps</VisualTitle>
      <AreaChart />
    </div>
  </div>
);

/* ---------- filters pane ---------- */

const FilterWell = ({ title }: { title: string }) => (
  <section className="pb-[27px]">
    <div className="flex h-6 items-start justify-between">
      <h3 className="leading-4">{title}</h3>
      <button type="button" aria-label={`More options for ${title}`} className="flex h-4 items-center gap-[3px] pt-1 pr-1">
        <Dots />
      </button>
    </div>
    <div className="flex h-[46px] items-center justify-center rounded-xs border border-[#c8c6c4]">Add data fields here</div>
  </section>
);

const FiltersPane = () => (
  <aside className="w-[201px] shrink-0 border-l border-[#979593] bg-white text-[11px] text-[#252423]">
    <div className="flex h-[38px] items-center pr-[9px] pl-[11px]">
      <svg viewBox="0 0 18 16" className="h-4 w-[18px]" fill="none" stroke="#252423" strokeWidth="1.400" aria-hidden>
        <path d="M1 1H17L11 8V15H7V8z" />
      </svg>
      <h2 className="ml-[7px] text-[15px] font-semibold">Filters</h2>
      <button type="button" aria-label="Hide filters pane" className="ml-auto">
        <svg viewBox="0 0 14 10" className="h-2.5 w-3.5" fill="none" stroke={K} strokeWidth="1.200">
          <path d="M1 6C3 .5 11 .5 13 6" />
          <circle cx="7" cy="6" r="2.200" />
        </svg>
      </button>
      <button type="button" aria-label="Collapse filters" className="ml-4">
        <DoubleChevron />
      </button>
    </div>
    <div className="border-b border-[#b3b0ad] px-2 pt-[7px] pb-1">
      <label className="flex h-[31px] w-[180px] items-center rounded-xs border border-[#a19f9d] pl-2.5">
        <span className="sr-only">Search filters</span>
        <Magnifier className="h-4 w-4" />
        <input type="search" placeholder="Search" className="ml-[13px] w-28 text-xs outline-none placeholder:text-[#252423]" />
      </label>
    </div>
    <div className="px-2 pt-[17px]">
      <FilterWell title="Filters on this page" />
      <FilterWell title="Filters on all pages" />
    </div>
  </aside>
);

/* ---------- visualizations pane ---------- */

const V = ({ children }: Kids) => (
  <svg viewBox="0 0 18 18" className="h-[18px] w-[18px] overflow-visible" fill="none" stroke={K} strokeWidth="1" aria-hidden>
    {children}
  </svg>
);

const Axes = () => <path d="M.5 0V17.500H18" />;
const R = ({ a, f = "#fff", s = K }: { a: [number, number, number, number]; f?: string; s?: string }) => (
  <rect x={a[0] + 0.5} y={a[1] + 0.5} width={a[2]} height={a[3]} fill={f} stroke={s} />
);
const SmallBolt = () => <path d="M3.500-.5H8.500L6 4H9L1.500 11.500L3.500 6H.5z" fill="#fbd67c" stroke="#d8690c" />;
const Slicer = () => (
  <>
    <path d="M1.500 3V16.500H8M17.500 3V6" />
    <R a={[1, 0, 16, 2]} f={GF} />
    <R a={[3, 5, 3, 3]} f={GF} s={GS} />
    <R a={[3, 11, 3, 3]} f={GF} s={GS} />
    <path transform="translate(8.500 7)" d="M.5.5H9.500L6.500 4V10.500L3.500 8.500V4z" fill="#fff" />
  </>
);

const visuals: [string, React.ReactNode][] = [
  ["Stacked bar chart", <><Axes /><R a={[0, 2, 5, 4]} /><R a={[5, 2, 6, 4]} f={BF} s={BS} /><R a={[0, 10, 8, 4]} /><R a={[8, 10, 7, 4]} f={GF} s={GS} /></>],
  ["Stacked column chart", <><Axes /><R a={[3, 11, 4, 6]} /><R a={[3, 5, 4, 6]} f={BF} s={BS} /><R a={[11, 8, 4, 9]} /><R a={[11, 2, 4, 6]} f={GF} s={GS} /></>],
  ["Clustered bar chart", <><path d="M.5-1V18H19" stroke={GS} strokeWidth="1.600" /><R a={[0, 0, 17, 4]} f={BF} s={BS} /><R a={[0, 5, 7, 3]} /><R a={[0, 9, 12, 3]} f={GF} s={GS} /><R a={[0, 13, 9, 3]} /></>],
  ["Clustered column chart", <><path d="M.5-1V18H19" stroke={GS} strokeWidth="1.600" /><R a={[1, 1, 4, 16]} f={BF} s={BS} /><R a={[5, 7, 3, 10]} /><R a={[9, 10, 4, 7]} f={GF} s={GS} /><R a={[13, 5, 4, 12]} f={GF} /></>],
  ["100% stacked bar chart", <><Axes /><R a={[0, 2, 5, 4]} /><R a={[5, 2, 10, 4]} f={BF} s={BS} /><R a={[0, 10, 10, 4]} /><R a={[10, 10, 5, 4]} f={GF} s={GS} /></>],
  ["100% stacked column chart", <><Axes /><R a={[3, 13, 4, 4]} /><R a={[3, 2, 4, 11]} f={BF} s={BS} /><R a={[11, 8, 4, 9]} /><R a={[11, 2, 4, 6]} f={GF} s={GS} /></>],
  ["Line chart", <><Axes /><path d="M1 11L7 4L12 9L17.500 3" stroke={BS} /><path d="M1 11.500L5 8L9 11L13 4L17.500 9" /></>],
  ["Area chart", <><path d="M7 16.500L13.500 1L17.500 9V16.500z" fill={GF} stroke={GS} /><path d="M.5 11L7 2L16 16.500H.5z" fill="#fff" /><path d="M.5 16.500L9 6L16 16.500z" fill={BF} stroke={BS} /><path d="M.5 8V17.500H18" /></>],
  ["Stacked area chart", <><path d="M1 7L5 10L11 3.500L17.500 8V15L12 10L6 16L1 11z" fill={BF} stroke="none" /><path d="M1 4L6 9L11 3L17.500 8M1 11L6 16L12 10L17.500 15" stroke={BS} strokeWidth="1.300" /><Axes /></>],
  ["100% stacked area chart", <><path d="M1 2H17.500V12L12 8L7 13L1 8z" fill={BF} stroke={BS} /><Axes /></>],
  ["Line and stacked column chart", <><R a={[3, 2, 4, 6]} f={BF} s={BS} /><R a={[3, 8, 4, 9]} /><R a={[11, 2, 4, 6]} f={GF} s={GS} /><R a={[11, 8, 4, 9]} /><Axes /><path d="M1 15L5 10L9 13.500L17.500 6" /></>],
  ["Line and clustered column chart", <><R a={[3, 8, 4, 9]} f={BF} s={BS} /><R a={[7, 2, 4, 15]} /><R a={[11, 6, 4, 11]} f={GF} s={GS} /><Axes /><path d="M1 15L5 11L9 14L17.500 6" /></>],
  ["Ribbon chart", <><path d="M1 3C6 3 6 8 9 8S13 2.500 17.500 2.500V6C14 6 13 11 9.500 11S5 7 1 7z" fill={GF} /><path d="M1 7C5 7 6 12 9.500 12S14 7 17.500 7V11C14 11 13 15.500 9.500 15.500S5 11 1 11z" fill={BF} stroke={BS} /><path d="M1.500 13.500H5V16.500H1.500zM14 13.500H17V16.500H14z" fill="#f2a04c" stroke="#d8690c" /><Axes /></>],
  ["Waterfall chart", <><R a={[2, 5, 3, 12]} /><R a={[5, 1, 3, 10]} /><R a={[8, 1, 2, 7]} f={BF} s={BS} /><R a={[10, 1, 2, 9]} f={BF} s={BS} /><R a={[12, 1, 4, 16]} /><Axes /></>],
  ["Funnel", <><R a={[0, 2, 17, 4]} f={BF} s={BS} /><R a={[3, 6, 11, 5]} f={BF} s={BS} /><R a={[5, 11, 7, 5]} f={BF} s={BS} /></>],
  ["Scatter chart", <><Axes /><path d="M3 4h3v3H3zM13 7h3v3h-3zM8 9h3v3H8z" fill={BF} stroke="none" /><path d="M12 2h3v3h-3zM4 12h3v3H4zM12 13h3v3h-3z" fill={K} stroke="none" /></>],
  ["Pie chart", <><circle cx="9" cy="9" r="8.500" fill="#fff" /><path d="M9 .5A8.500 8.500 0 0 1 15 15L9 9z" fill={BF} stroke={BS} /></>],
  ["Donut chart", <><circle cx="9" cy="9" r="6.300" stroke={BS} strokeWidth="5.400" /><circle cx="9" cy="9" r="6.300" stroke={BF} strokeWidth="3.600" /><path d="M2.700 9A6.300 6.300 0 0 1 9 2.700" stroke={K} strokeWidth="5.400" /><path d="M3.200 8.500A6 6 0 0 1 8.500 3" stroke="#fff" strokeWidth="3.600" /></>],
  ["Treemap", <><R a={[0, 0, 8, 17]} f={BF} s={BS} /><R a={[8, 0, 9, 6]} /><R a={[8, 6, 5, 11]} /><R a={[13, 6, 4, 11]} /><path d="M1 9.500H8.500" stroke={BS} /><path d="M13.500 11.500H17.500" /></>],
  ["Map", <><circle cx="9.500" cy="7" r="6.300" fill="#fff" /><path d="M6 3.500L9 2.500L10 5L7 7L5 6zM11 7L14 6L13.500 10L10.500 11zM12 2.500L14 4" fill="#2d9d49" stroke="#2d9d49" /><path d="M3.500 2C0 6 2 14.500 9 15.300C12 15.500 14 14.500 15.500 13M9.500 15.500V17M5 17.500H14" /></>],
  ["Filled map", <><path d="M.5 2L6 3L9 1.500V8L6 12L2 9z" fill={BF} stroke={BS} /><path d="M9 2.500L13 1L17.500 3V8H9z" fill={GF} stroke={GS} /><path d="M9 8H17L14 12L13 16L9 13L6 15V11z" fill={BF} stroke={BS} /></>],
  ["Azure map", <><path d="M11-.5L2 16L10.500 11.500z" fill="#44b5e8" stroke="none" /><path d="M11-.5L17 18L10.500 11.500z" fill="#1767a8" stroke="none" /></>],
  ["Gauge", <><path d="M.5 13A8.500 8.500 0 0 1 17.500 13H13A4 4 0 0 0 5 13z" fill={BF} stroke={BS} /><path d="M.5 13A8.500 8.500 0 0 1 5 5.600L7 9.500A4 4 0 0 0 5 13z" fill="#fff" /><path d="M8.500 13L12 7.500" strokeWidth="2" /></>],
  ["Card", <><R a={[0, 1, 17, 14]} /><text x="9" y="10.500" fontSize="8.500" textAnchor="middle" fill="#2b88c8" stroke="none" fontWeight="600">123</text><path d="M3 13H15" stroke={GS} /></>],
  ["Multi-row card", <><R a={[0, 0, 17, 16]} /><path d="M3.500 3V14" stroke={GS} /><path d="M5 4.500H14M5 12H14" stroke={BS} strokeWidth="1.800" /><path d="M5 8.300H11" stroke={BS} strokeWidth="1.800" /></>],
  ["KPI", <><R a={[0, 1, 17, 13]} /><path d="M3 8.500L5.500 4L8 8.500z" fill="#6cc07a" stroke="#2d9d49" /><path d="M10 4L15 4L12.500 9z" fill="#e8444c" stroke="#c4282c" /><path d="M3 11.500H8M10 11.500H15" stroke={GS} /></>],
  ["Slicer", <Slicer />],
  ["Table", <><R a={[0, 1, 17, 16]} /><R a={[0, 1, 17, 2]} f={GF} /><path d="M.5 8.500H17.500M.5 13H17.500M6 4V17.500M12 4V17.500" stroke={GS} /></>],
  ["Matrix", <><R a={[0, 1, 17, 16]} /><path d="M12 4H17.500V13H17.500V17.500H1V13H12z" fill={BF} stroke="none" /><R a={[0, 1, 17, 2]} f={GF} /><path d="M.5 8.500H17.500M.5 13H17.500M6 4V17.500M12 4V17.500" stroke={BS} /><path d="M.5 4V17.500" /></>],
  ["R script visual", <text x="8" y="15" fontSize="16" textAnchor="middle" fontWeight="700" fill="#2b88c8" stroke="none">R</text>],
  ["Python visual", <text x="9" y="13" fontSize="15" textAnchor="middle" fontWeight="600" fill="#2b88c8" stroke="none">Py</text>],
  ["Key influencers", <><Axes /><path d="M1 3.500H13M1 8.500H9M1 12.500H5" stroke={GS} /><circle cx="15" cy="3.500" r="2" fill={BF} stroke={BS} /><circle cx="10.500" cy="8.500" r="1.500" fill="#fff" stroke={GS} /><circle cx="6.500" cy="12.500" r="1.500" fill="#fff" stroke={GS} /></>],
  ["Decomposition tree", <><path d="M6 9H11M9 3V15.500M9 3H12M9 15.500H12" /><R a={[0, 7, 6, 3]} f={BF} s={BS} /><R a={[11, 1, 6, 4]} f={BF} s={BS} /><R a={[11, 7, 6, 3]} f={BF} s={BS} /><R a={[11, 13, 6, 3]} f={BF} s={BS} /></>],
  ["Q&A", <><path d="M.5 2.500H17.500V12.500H8L3.500 17V12.500H.5z" fill="#fff" /><path d="M.5 12.500H3.500V17L8 12.500" stroke={BS} /></>],
  ["Narrative", <><path d="M2.500 5V.5H10.500L15.500 5.500V17.500H2.500V10M10.500.5V5.500H15.500" fill="#fff" /><path d="M1 5.500H4V8.500H1z" fill={BF} stroke={BS} /><path d="M6 8.500H12M5 12.500H10" stroke={BS} /></>],
  ["Metrics", <><path d="M4.500.5H13.500V5C13.500 13 4.500 13 4.500 5zM9 11V14M4.500 3.500H.5C.5 7 2.500 8.500 5 8.500M13.500 3.500H17.500C17.500 7 15.500 8.500 13 8.500" /><path d="M5.500 14.500H12.500V17.500H5.500z" fill={BF} stroke={BS} /></>],
  ["Paginated report", <><path d="M1.500-.5H11.500L15.500 3.500V18H1.500z" fill="#fff" strokeWidth="1.500" /><path d="M11.500-.5V4H15.500" /><path d="M4 10h2v6H4zM8 12.500h2V16H8zM12 8h2v8h-2z" fill={K} stroke="none" /></>],
  ["Card (new)", <><path d="M8 1.500H17.500V15.500H1.500V10" /><text x="10.500" y="11.500" fontSize="8.500" textAnchor="middle" fill="#2b88c8" stroke="none" fontWeight="600">123</text><path d="M4 13.500H15" stroke={GS} /><SmallBolt /></>],
  ["Slicer (new)", <><Slicer /><SmallBolt /></>],
  ["ArcGIS map", <><circle cx="9" cy="9" r="8.200" fill="#d8d6d4" stroke="#979593" strokeDasharray="2 1" /><circle cx="9" cy="9" r="6.300" fill="#1f74b4" stroke="none" /><path d="M4 6L8 3L12 4L9 7L5 9zM7 12L12 8L15 9L12 14L8 14.500z" fill="#5fb85c" stroke="none" /></>],
  ["Power Apps", <g stroke="#8a3a9c"><path d="M8 1.200Q9 .2 10 1.200L16.800 8Q17.800 9 16.800 10L10 16.800Q9 17.800 8 16.800L1.200 10Q.2 9 1.200 8z" fill="#fff" /><path d="M5.200 5L9 9L5.200 13M12.800 5L9 9L12.800 13M9 1.500L12.800 5L16.500 9L12.800 13L9 16.500L5.200 13L1.500 9L5.200 5" /></g>],
  ["Power Automate", <g stroke="#1a78d4" strokeWidth="1.100"><path d="M.8 2.500H11L17.200 9L11 15.500H.8L7 9z" fill="#fff" /><path d="M6 2.500L12 9L6 15.500M3.500 12.500H9" /></g>],
];

const Toggle = ({ label, value, onChange }: { label: string; value: boolean; onChange: (v: boolean) => void }) => (
  <label className="flex h-[27px] cursor-pointer items-center justify-between pr-4">
    {label}
    <input type="checkbox" className="sr-only" checked={value} onChange={(e) => onChange(e.target.checked)} />
    <span
      className={`flex h-[15px] w-8 items-center justify-between rounded-full border px-1 text-[9px] leading-3 ${
        value ? "flex-row-reverse border-[#117865] bg-[#117865] text-white" : "border-[#605e5c] bg-white text-[#605e5c]"
      }`}
    >
      <span className={`h-[7px] w-[7px] rounded-full ${value ? "bg-white" : "bg-[#605e5c]"}`} />
      {value ? "On" : "Off"}
    </span>
  </label>
);

const VisualizationsPane = () => {
  const [cross, setCross] = useState(false);
  const [keep, setKeep] = useState(true);
  return (
    <aside className="w-[181px] shrink-0 border-l border-[#d8d6d4] bg-[#f3f2f1] text-[11px] text-[#252423]">
      <div className="flex h-[38px] items-center justify-between pr-[7px] pl-2">
        <h2 className="text-[15px] font-semibold">Visualizations</h2>
        <button type="button" aria-label="Collapse visualizations">
          <DoubleChevron />
        </button>
      </div>
      <p className="pl-2 leading-4 font-semibold">Build visual</p>
      <div className="flex pt-[3px] pl-2">
        <button type="button" aria-label="Build visual" className="flex h-8 w-8 items-center justify-center rounded-xs bg-[#d2d0ce]">
          <svg viewBox="0 0 24 26" className="h-[26px] w-6" aria-hidden>
            <path d="M0 1.500H19" stroke={K} />
            <path d="M.5 6.500H23.500V13.500H.5zM.5 17.500H23.500V24.500H.5z" fill="#117865" stroke="#000" strokeDasharray="2 1" />
          </svg>
        </button>
        <button type="button" aria-label="Format visual" className="ml-[38px] flex h-8 items-center">
          <svg viewBox="0 0 25 26" className="h-[26px] w-[25px]" fill="none" stroke={K} strokeWidth="1.200" aria-hidden>
            <path d="M8 24.500H.8V1H11L17 7V10M11 1V7.500H17" fill="#fff" />
            <path d="M24 9.500L17.500 19L14.500 16.500L22 9.500zM14.500 16.500C10.500 17.500 12 23 7.500 24C13 25.500 17 24 17.500 19" fill="#fff" />
          </svg>
        </button>
      </div>
      <svg viewBox="0 0 180 13" preserveAspectRatio="xMinYMid slice" className="block h-[13px] w-full" fill="none" stroke="#8a8886" aria-hidden>
        <path d="M0 12.500H16.500L24 5L31.500 12.500H180" />
      </svg>
      <div className="grid grid-cols-[repeat(6,28px)] gap-y-2.5 pt-[11px] pb-3 pl-[11px]">
        {visuals.map(([name, art]) => (
          <button key={name} type="button" title={name} aria-label={name} className="h-[18px] w-[18px]">
            <V>{art}</V>
          </button>
        ))}
      </div>
      <button type="button" aria-label="Get more visuals" className="flex gap-1 pt-[5px] pb-[18px] pl-[13px]">
        <Dots />
      </button>
      <div className="border-t border-[#d8d6d4] pt-[9px] pr-1.5 pl-1">
        <h3 className="pl-2 leading-4">Values</h3>
        <div className="mt-1.5 flex h-[27px] items-center rounded-xs border border-dashed border-[#c8c6c4] bg-white pl-2.5">Add data fields here</div>
        <div className="pt-[11px] pl-2">
          <h3 className="leading-4">Drill through</h3>
          <div className="pt-1">
            <Toggle label="Cross-report" value={cross} onChange={setCross} />
            <Toggle label="Keep all filters" value={keep} onChange={setKeep} />
          </div>
        </div>
        <div className="mt-[5px] flex h-[26px] items-center rounded-xs border border-dashed border-[#c8c6c4] bg-white pl-2 whitespace-nowrap">
          Add drill-through fields here
        </div>
      </div>
    </aside>
  );
};

/* ---------- data pane ---------- */

const tables = ["consumer_preferences", "consumers", "data_dictionary", "ratings", "restaurant_cuisines", "restaurants"];

const DataPane = () => (
  <aside className="w-[181px] shrink-0 border-l border-[#d8d6d4] bg-[#f3f2f1] text-[#252423]">
    <div className="flex h-[38px] items-center justify-between pr-[7px] pl-2">
      <h2 className="text-[15px] font-semibold">Data</h2>
      <button type="button" aria-label="Collapse data">
        <DoubleChevron />
      </button>
    </div>
    <div className="pt-[7px] pr-1 pl-1">
      <label className="flex h-[27px] items-center rounded-xs border border-[#605e5c] pl-[7px] text-[#605e5c]">
        <span className="sr-only">Search data</span>
        <Magnifier className="h-3.5 w-3.5" />
        <input type="search" placeholder="Search" className="ml-[7px] w-32 bg-transparent text-[13px] outline-none placeholder:text-[#605e5c]" />
      </label>
    </div>
    <ul className="pt-[10px] text-[11px]">
      {tables.map((t) => (
        <li key={t}>
          <button type="button" className="flex h-6 w-full items-center pl-[15px]">
            <svg viewBox="0 0 8 12" className="h-3 w-2" fill="none" stroke="#605e5c" aria-hidden>
              <path d="M1 .5L6.500 6L1 11.500" />
            </svg>
            <svg viewBox="0 0 12 12" className="ml-[6px] h-3 w-3" fill="none" stroke="#252423" strokeWidth="1.200" aria-hidden>
              <rect x=".6" y=".6" width="10.800" height="10.800" rx="1.500" />
              <path d="M.5 4H11.500M.5 8H11.500M4 .5V11.500M8 .5V11.500" />
            </svg>
            <span className="ml-1.5">{t}</span>
          </button>
        </li>
      ))}
    </ul>
  </aside>
);

/* ---------- page tabs and status bar ---------- */

const PageTabs = () => (
  <div className="flex h-[35px] bg-[#f3f2f1]">
    <button type="button" aria-label="Desktop layout" className="ml-2.5 flex w-6 flex-col items-center pt-[7px]">
      <svg viewBox="0 0 20 15" className="h-[15px] w-5" fill="none" stroke="#605e5c" strokeWidth="1.300">
        <path d="M.6.6H19.400V10.500H.6zM10 10.500V13M6.500 13.500H13.500" />
      </svg>
      <span className="mt-[5px] h-[3px] w-6 rounded bg-[#117865]" />
    </button>
    <button type="button" aria-label="Mobile layout" className="ml-[26px] flex items-start pt-[5px]">
      <svg viewBox="0 0 13 20" className="h-5 w-[13px]" fill="none" stroke="#605e5c" strokeWidth="1.300">
        <rect x=".6" y=".6" width="11.800" height="18.800" rx="1" />
        <path d="M5.500 16.500H7.500" />
      </svg>
    </button>
    <button type="button" aria-label="Previous page" className="ml-[21px] text-[#c8c6c4]">
      <svg viewBox="0 0 5 8" className="h-2 w-[5px]" fill="currentColor"><path d="M5 0V8L0 4z" /></svg>
    </button>
    <button type="button" aria-label="Next page" className="ml-[17px] text-[#c8c6c4]">
      <svg viewBox="0 0 5 8" className="h-2 w-[5px]" fill="currentColor"><path d="M0 0V8L5 4z" /></svg>
    </button>
    <button type="button" className="ml-[5px] h-[35px] w-[77px] border-b-[3px] border-l border-b-[#117865] border-l-[#a19f9d] bg-white pt-1 text-xs text-[#252423]">
      Page 1
    </button>
    <button type="button" aria-label="New page" className="flex h-[35px] w-[39px] items-center justify-center bg-[#117865]">
      <svg viewBox="0 0 12 12" className="h-3 w-3" stroke="#fff" strokeWidth="2.600"><path d="M6 .5V11.500M.5 6H11.500" /></svg>
    </button>
  </div>
);

const StatusBar = () => {
  const [zoom, setZoom] = useState(20);
  return (
    <footer className="flex h-6 items-center border-t border-[#e1dfdd] bg-[#f3f2f1] pt-0.5 pr-1.5 pl-1 text-[11px] text-[#605e5c]">
      <span>Page 1 of 1</span>
      <div className="ml-auto flex items-center">
        <button type="button" aria-label="Zoom out" className="h-px w-1 bg-[#3b3a39]" />
        <div className="relative ml-1 flex h-4 w-[102px] items-center">
          <span className="absolute left-1/2 h-1.5 w-px bg-[#605e5c]" />
          <input
            type="range"
            min={0}
            max={200}
            value={zoom}
            onChange={(e) => setZoom(Number(e.target.value))}
            aria-label="Zoom level"
            className="h-px w-full appearance-none bg-[#605e5c] [&::-webkit-slider-thumb]:h-2.5 [&::-webkit-slider-thumb]:w-1 [&::-webkit-slider-thumb]:appearance-none [&::-webkit-slider-thumb]:bg-[#3b3a39]"
          />
        </div>
        <button type="button" aria-label="Zoom in" className="ml-[6px] flex">
          <svg viewBox="0 0 9 9" className="h-[9px] w-[9px]" stroke={K}><path d="M4.500 0V9M0 4.500H9" /></svg>
        </button>
        <span className="ml-[12px]">{zoom}%</span>
        <button type="button" aria-label="Fit to page" className="ml-[19px]">
          <svg viewBox="0 0 16 12" className="h-3 w-4" fill="none" stroke={K}>
            <rect x=".5" y=".5" width="15" height="11" />
            <path d="M3 4.500V3H5M11 3H13V4.500M13 7.500V9H11M5 9H3V7.500" stroke="#117865" strokeWidth="1.200" />
          </svg>
        </button>
        <a href="#update" className="ml-[18px] whitespace-nowrap">Update available (click to download)</a>
      </div>
    </footer>
  );
};

export default function App() {
  return (
    <div className="flex min-h-screen flex-col bg-white font-['Open_Sans','Noto_Sans',sans-serif]">
      <TitleBar />
      <Ribbon />
      <main className="flex flex-1">
        <SideNav />
        <div className="flex min-w-0 flex-1 flex-col">
          <div className="flex flex-1">
            <div className="min-w-0 flex-1">
              <Report />
            </div>
            <FiltersPane />
          </div>
          <PageTabs />
        </div>
        <VisualizationsPane />
        <DataPane />
      </main>
      <StatusBar />
    </div>
  );
}
